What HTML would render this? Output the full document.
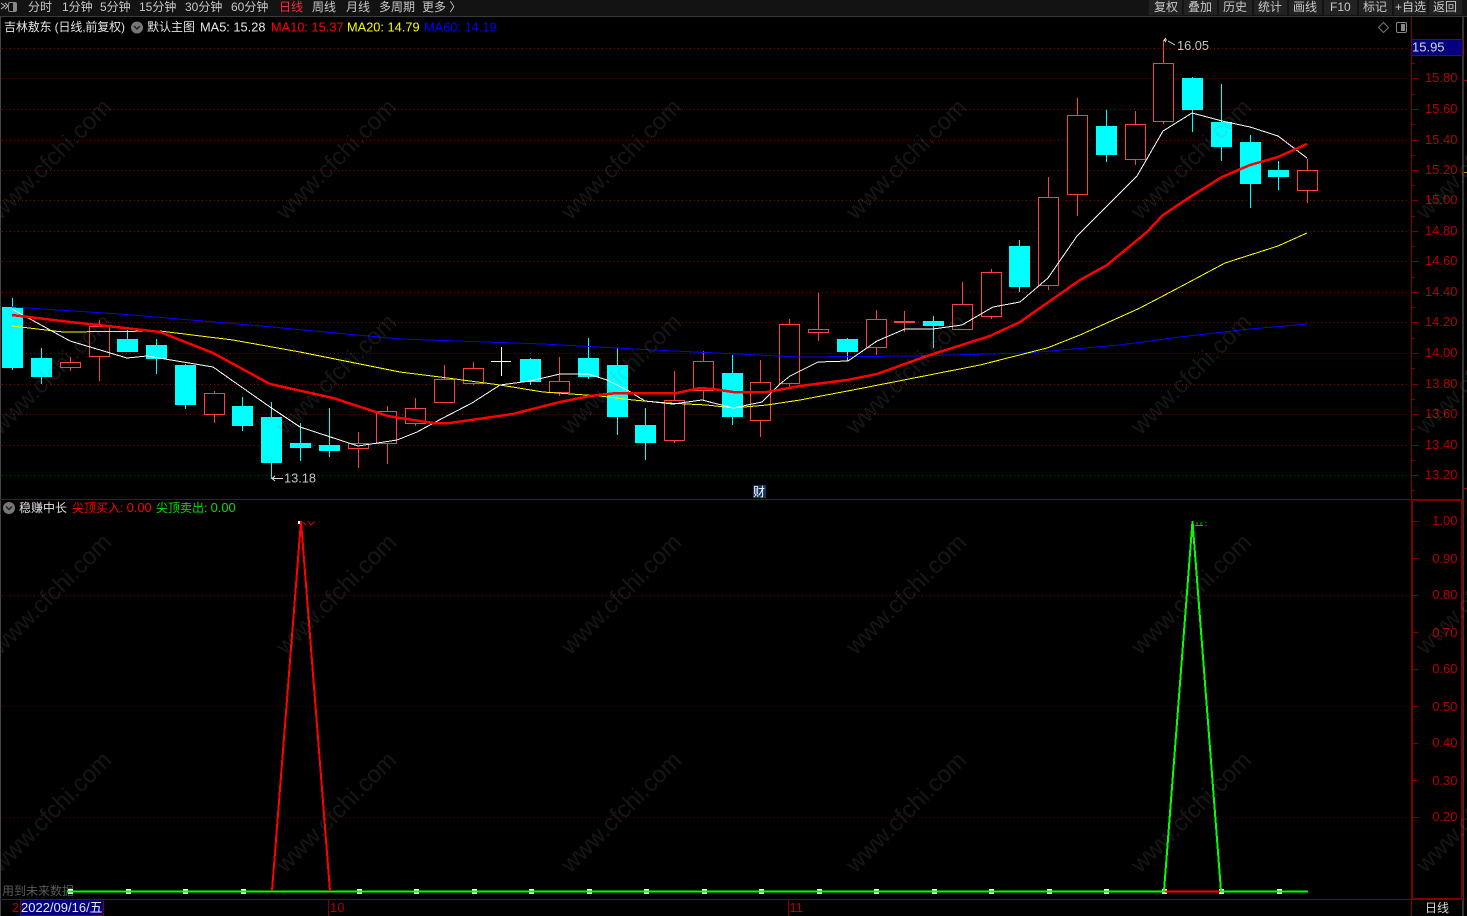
<!DOCTYPE html>
<html lang="zh-CN">
<head>
<meta charset="utf-8">
<title>吉林敖东</title>
<style>
html,body{margin:0;padding:0;background:#000;width:1467px;height:916px;overflow:hidden}
svg{display:block;position:absolute;left:0;top:0}
text{font-family:"Liberation Sans","Noto Sans CJK SC",sans-serif}
</style>
</head>
<body>
<svg width="1467" height="916" viewBox="0 0 1467 916" xmlns="http://www.w3.org/2000/svg">
<rect width="1467" height="916" fill="#000"/>

<!-- toolbar -->
<rect x="0" y="0" width="1467" height="16" fill="#131313"/>
<rect x="0" y="16" width="1467" height="1" fill="#3a3a3a"/>
<g shape-rendering="crispEdges">
<rect x="1149" y="0" width="33" height="15" fill="#222"/>
<rect x="1184" y="0" width="33" height="15" fill="#222"/>
<rect x="1219" y="0" width="33" height="15" fill="#222"/>
<rect x="1254" y="0" width="33" height="15" fill="#222"/>
<rect x="1289" y="0" width="33" height="15" fill="#222"/>
<rect x="1324" y="0" width="33" height="15" fill="#222"/>
<rect x="1359" y="0" width="33" height="15" fill="#222"/>
<rect x="1394" y="0" width="33" height="15" fill="#222"/>
<rect x="1429" y="0" width="33" height="15" fill="#222"/>
</g>
<path d="M1 3L5 6L1 9M5 3L8 6L5 9" fill="none" stroke="#bbb" stroke-width="1"/>
<rect x="8.5" y="2.5" width="8" height="9" rx="1.5" fill="#111" stroke="#888"/>
<rect x="13" y="3" width="3" height="8" fill="#888"/>
<g font-size="12" fill="#c8c8c8">
<text x="28" y="11">分时</text>
<text x="62" y="11">1分钟</text>
<text x="100" y="11">5分钟</text>
<text x="139" y="11">15分钟</text>
<text x="185" y="11">30分钟</text>
<text x="231" y="11">60分钟</text>
<text x="279" y="11" fill="#f03030">日线</text>
<text x="312" y="11">周线</text>
<text x="346" y="11">月线</text>
<text x="379" y="11">多周期</text>
<text x="422" y="11">更多 〉</text>
<text x="1154" y="11">复权</text>
<text x="1188" y="11">叠加</text>
<text x="1223" y="11">历史</text>
<text x="1258" y="11">统计</text>
<text x="1293" y="11">画线</text>
<text x="1330" y="11">F10</text>
<text x="1363" y="11">标记</text>
<text x="1395" y="11">+自选</text>
<text x="1433" y="11">返回</text>
</g>

<!-- frame -->
<g shape-rendering="crispEdges">
<rect x="0" y="17" width="1" height="899" fill="#444"/>
<rect x="1462" y="17" width="2" height="899" fill="#333"/>
<rect x="1411" y="17" width="1" height="482" fill="#800000"/>
<rect x="0" y="499" width="1462" height="1" fill="#800000"/>
<rect x="0" y="899" width="1411" height="1" fill="#800000"/>
<rect x="1411" y="899" width="1" height="17" fill="#800000"/>
<rect x="1412" y="500" width="50" height="399" fill="none" stroke="#800000" stroke-width="2"/>
<rect x="1464" y="80" width="3" height="1" fill="#a00000"/>
<rect x="1464" y="172" width="3" height="1" fill="#c09000"/>
<rect x="1464" y="488" width="3" height="1" fill="#a00000"/>
</g>

<!-- grid -->
<g stroke="#900000" stroke-width="1" stroke-dasharray="1 3" shape-rendering="crispEdges">
<path d="M2 48.5H1408M2 78.5H1408M2 109.5H1408M2 140.5H1408M2 170.5H1408M2 200.5H1408M2 231.5H1408M2 261.5H1408M2 292.5H1408M2 322.5H1408M2 353.5H1408M2 384.5H1408M2 414.5H1408M2 445.5H1408M2 475.5H1408"/>
<path d="M2 595.5H1408" stroke="#700000"/>
<path d="M2 706.5H1408M2 817.5H1408" stroke="#500000"/>
</g>

<!-- axis ticks -->
<g stroke="#800000" stroke-width="1" shape-rendering="crispEdges" fill="none">
<path d="M1411 78.5H1418M1411 109.5H1418M1411 140.5H1418M1411 170.5H1418M1411 200.5H1418M1411 231.5H1418M1411 261.5H1418M1411 292.5H1418M1411 322.5H1418M1411 353.5H1418M1411 384.5H1418M1411 414.5H1418M1411 445.5H1418M1411 475.5H1418"/>
<path d="M1411 63.5H1415M1411 94.5H1415M1411 124.5H1415M1411 155.5H1415M1411 185.5H1415M1411 216.5H1415M1411 246.5H1415M1411 277.5H1415M1411 307.5H1415M1411 338.5H1415M1411 368.5H1415M1411 399.5H1415M1411 429.5H1415M1411 460.5H1415M1411 490.5H1415"/>
<path d="M1413 521.5H1418M1413 558.5H1418M1413 595.5H1418M1413 632.5H1418M1413 669.5H1418M1413 706.5H1418M1413 743.5H1418M1413 780.5H1418M1413 817.5H1418"/>
<path d="M328.5 900V916M788.5 900V916"/>
</g>
<g font-size="13" fill="#b00000" text-anchor="end">
<text x="1457.500" y="82">15.80</text>
<text x="1457.500" y="113">15.60</text>
<text x="1457.500" y="144">15.40</text>
<text x="1457.500" y="174">15.20</text>
<text x="1457.500" y="204">15.00</text>
<text x="1457.500" y="235">14.80</text>
<text x="1457.500" y="265">14.60</text>
<text x="1457.500" y="296">14.40</text>
<text x="1457.500" y="326">14.20</text>
<text x="1457.500" y="357">14.00</text>
<text x="1457.500" y="388">13.80</text>
<text x="1457.500" y="418">13.60</text>
<text x="1457.500" y="449">13.40</text>
<text x="1457.500" y="479">13.20</text>
<text x="1457.500" y="525">1.00</text>
<text x="1457.500" y="563">0.90</text>
<text x="1457.500" y="599">0.80</text>
<text x="1457.500" y="637">0.70</text>
<text x="1457.500" y="673">0.60</text>
<text x="1457.500" y="711">0.50</text>
<text x="1457.500" y="747">0.40</text>
<text x="1457.500" y="785">0.30</text>
<text x="1457.500" y="821">0.20</text>
</g>
<rect x="1411.5" y="39.5" width="51" height="16" fill="#000080" stroke="#800000" shape-rendering="crispEdges"/>
<text x="1412" y="51.500" font-size="13" fill="#d8d8d8">15.95</text>

<!-- candle wicks -->
<g shape-rendering="crispEdges" fill="none" stroke-width="1">
<path stroke="#00ffff" d="M12.5 298V370M41.5 348V384M127.5 330V352M156.5 339V374M185.5 364V409M242.5 397V431M271.5 402V479M300.5 423V461M329.5 408V457M530.5 358V385M588.5 338V379M617.5 348V435M645.5 408V460M732.5 355V425M847.5 338V361M933.5 316V348M1019.5 240V292M1106.5 110V162M1192.5 77V132M1221.5 84V161M1250.5 135V208M1278.5 161V190"/>
<path stroke="#ff4040" d="M70.5 357V371M99.5 320V381M214.5 391V423M358.5 432V468M387.5 406V464M415.5 398V426M444.5 365V403M473.5 362V385M559.5 357V396M674.5 371V443M703.5 351V400M760.5 360V437M789.5 319V387M818.5 293V341M876.5 310V355M904.5 311V332M962.5 282V329M991.5 269V319M1048.5 177V290M1077.5 98V216M1135.5 111V165M1163.5 40V124M1307.5 159V203"/>
<path stroke="#ffffff" d="M501.5 347V376M491 361.5H511"/>
</g>
<!-- hollow red bodies -->
<g shape-rendering="crispEdges" fill="#000" stroke="#ff4040" stroke-width="1">
<rect x="60.5" y="362.5" width="20" height="5"/>
<rect x="89.5" y="326.5" width="20" height="30"/>
<rect x="204.5" y="393.5" width="20" height="21"/>
<rect x="348.5" y="443.5" width="20" height="5"/>
<rect x="376.5" y="411.5" width="20" height="32"/>
<rect x="405.5" y="408.5" width="20" height="15"/>
<rect x="434.5" y="379.5" width="20" height="23"/>
<rect x="463.5" y="368.5" width="20" height="15"/>
<rect x="549.5" y="381.5" width="20" height="11"/>
<rect x="664.5" y="400.5" width="20" height="40"/>
<rect x="693.5" y="361.5" width="20" height="29"/>
<rect x="750.5" y="382.5" width="20" height="38"/>
<rect x="779.5" y="324.5" width="20" height="59"/>
<rect x="808.5" y="329.5" width="20" height="3"/>
<rect x="866.5" y="319.5" width="20" height="28"/>
<rect x="952.5" y="304.5" width="20" height="25"/>
<rect x="981.5" y="272.5" width="20" height="44"/>
<rect x="1038.5" y="197.5" width="20" height="88"/>
<rect x="1067.5" y="115.5" width="20" height="79"/>
<rect x="1125.5" y="124.5" width="20" height="35"/>
<rect x="1153.5" y="63.5" width="20" height="58"/>
<rect x="1297.5" y="170.5" width="20" height="20"/>
</g>
<rect x="894" y="321" width="21" height="2" fill="#ff4040" shape-rendering="crispEdges"/>
<!-- solid cyan bodies -->
<g shape-rendering="crispEdges" fill="#00ffff">
<rect x="2" y="307" width="21" height="61"/>
<rect x="31" y="358" width="21" height="19"/>
<rect x="117" y="339" width="21" height="13"/>
<rect x="146" y="345" width="21" height="14"/>
<rect x="175" y="365" width="21" height="40"/>
<rect x="232" y="406" width="21" height="20"/>
<rect x="261" y="417" width="21" height="46"/>
<rect x="290" y="443" width="21" height="5"/>
<rect x="319" y="445" width="21" height="6"/>
<rect x="520" y="359" width="21" height="23"/>
<rect x="578" y="358" width="21" height="19"/>
<rect x="607" y="365" width="21" height="52"/>
<rect x="635" y="425" width="21" height="18"/>
<rect x="722" y="373" width="21" height="44"/>
<rect x="837" y="339" width="21" height="13"/>
<rect x="923" y="321" width="21" height="5"/>
<rect x="1009" y="246" width="21" height="41"/>
<rect x="1096" y="126" width="21" height="29"/>
<rect x="1182" y="78" width="21" height="32"/>
<rect x="1211" y="122" width="21" height="25"/>
<rect x="1240" y="142" width="21" height="42"/>
<rect x="1268" y="170" width="21" height="7"/>
</g>

<!-- moving averages -->
<g fill="none" stroke-linejoin="round" shape-rendering="crispEdges">
<polyline stroke="#0000ff" stroke-width="1" points="12,307 120,314 250,325 400,339 543,344 653,350 800,357 913,356 1027,353 1120,345 1180,337 1250,329 1307,324"/>
<polyline stroke="#ffff00" stroke-width="1" points="12,326 63,332 160,331 233,340 300,352 400,372 440,377 500,385 543,392 600,396 633,400 667,403 707,405 733,408 767,405 800,400 858,389 980,365 1047,348 1080,335 1140,308 1180,287 1225,263 1278,246 1307,233"/>
<polyline stroke="#ffffff" stroke-width="1" points="12,309 70,341 127,358 147,356 213,367 270,407 300,427 358,446 397,440 417,432 443,418 472,403 500,385 530,381 560,374 588,374 607,380 627,390 645,401 673,404 702,400 733,408 762,402 780,384 790,376 818,362 848,361 877,341 905,329 933,329 962,325 993,307 1020,302 1048,278 1077,236 1137,176 1163,131 1192,113 1222,121 1250,127 1278,136 1307,158"/>
<polyline stroke="#ff0000" stroke-width="2.5" points="12,315 70,322 107,326 160,332 213,353 270,384 333,398 388,416 400,418 433,423 450,423 513,414 560,402 590,396 617,393 677,393 700,388 713,389 733,392 767,392 800,386 847,380 877,374 927,356 990,336 1020,322 1080,280 1107,265 1147,232 1163,215 1190,197 1222,177 1250,165 1278,157 1307,144"/>
</g>

<!-- high/low labels -->
<path d="M1164 40H1167M1164 40L1166 38M1164 40L1166 42M1168 41L1175 45" fill="none" stroke="#e0e0e0" stroke-width="1"/>
<text x="1177" y="50" font-size="12.800" fill="#c4c4c4">16.05</text>
<path d="M272 478.5H283M272 478.5L275 476M272 478.5L275 481" fill="none" stroke="#e0e0e0" stroke-width="1"/>
<text x="284" y="482.500" font-size="12.800" fill="#c4c4c4">13.18</text>
<rect x="753" y="485" width="13" height="13" fill="#12365f"/>
<text x="753" y="496" font-size="12" fill="#fff">财</text>

<!-- top-right icons -->
<path d="M1383.5 22.5L1388.5 27.5L1383.5 32.5L1378.5 27.5Z" fill="none" stroke="#777"/>
<rect x="1396.5" y="22.5" width="10" height="10" rx="1.5" fill="none" stroke="#888"/>
<rect x="1401" y="24" width="4" height="7" fill="#888"/>

<!-- title row -->
<text x="4" y="31" font-size="12" fill="#e4e4e4" textLength="121" lengthAdjust="spacing">吉林敖东 (日线,前复权)</text>
<circle cx="137" cy="27.5" r="6" fill="#777"/>
<path d="M134 26L137 29L140 26" fill="none" stroke="#222" stroke-width="1.5"/>
<text x="147" y="31" font-size="12" fill="#e4e4e4">默认主图</text>
<g font-size="12.800">
<text x="200" y="31.500" fill="#e8e8e8">MA5: 15.28</text>
<text x="271" y="31.500" fill="#ff0000">MA10: 15.37</text>
<text x="347" y="31.500" fill="#ffff00">MA20: 14.79</text>
<text x="424" y="31.500" fill="#0000ff">MA60: 14.19</text>
</g>

<!-- indicator row -->
<circle cx="9" cy="508" r="6" fill="#777"/>
<path d="M6 506.5L9 509.5L12 506.5" fill="none" stroke="#222" stroke-width="1.5"/>
<text x="19" y="512" font-size="12" fill="#e0e0e0">稳赚中长</text>
<text x="72" y="512" font-size="12" fill="#ff0000">尖顶买入: <tspan font-size="12.800">0.00</tspan></text>
<text x="156" y="512" font-size="12" fill="#00e000">尖顶卖出: <tspan font-size="12.800">0.00</tspan></text>

<!-- lower panel signal -->
<text x="2" y="895" font-size="12" fill="#5a5a5a">用到未来数据</text>
<g fill="#fff" shape-rendering="crispEdges">
<rect x="68" y="889" width="5" height="5"/><rect x="126" y="889" width="5" height="5"/><rect x="183" y="889" width="5" height="5"/><rect x="241" y="889" width="5" height="5"/><rect x="357" y="889" width="5" height="5"/><rect x="414" y="889" width="5" height="5"/><rect x="472" y="889" width="5" height="5"/><rect x="529" y="889" width="5" height="5"/><rect x="587" y="889" width="5" height="5"/><rect x="644" y="889" width="5" height="5"/><rect x="702" y="889" width="5" height="5"/><rect x="759" y="889" width="5" height="5"/><rect x="817" y="889" width="5" height="5"/><rect x="874" y="889" width="5" height="5"/><rect x="932" y="889" width="5" height="5"/><rect x="989" y="889" width="5" height="5"/><rect x="1047" y="889" width="5" height="5"/><rect x="1104" y="889" width="5" height="5"/><rect x="1162" y="889" width="5" height="5"/><rect x="1219" y="889" width="5" height="5"/><rect x="1277" y="889" width="5" height="5"/>
<rect x="298" y="521" width="2" height="3"/>
</g>
<path d="M67 891.5H1308" stroke="#00ff00" stroke-width="2" shape-rendering="crispEdges"/>
<path d="M1165 891.5H1220" stroke="#ff0000" stroke-width="2" shape-rendering="crispEdges"/>
<polyline points="272,891 301,521 330,891" fill="none" stroke="#ff0000" stroke-width="2" shape-rendering="crispEdges"/>
<polyline points="1164,891 1192.500,521 1221,891" fill="none" stroke="#00ff00" stroke-width="2" shape-rendering="crispEdges"/>
<path d="M303 522L306 525M308 521L311 525L314 522M314 522H315" fill="none" stroke="#e00000" stroke-width="1"/>
<path d="M1195 525.500H1203M1197 522V525M1201 522V525M1206 522V523M1206 525V526" fill="none" stroke="#00c000" stroke-width="1" shape-rendering="crispEdges"/>

<!-- date axis -->
<text x="12" y="912" font-size="13" fill="#b00000">2</text>
<rect x="20.500" y="899.500" width="83" height="16" fill="#000080" stroke="#800000" shape-rendering="crispEdges"/>
<text x="21" y="912" font-size="13" fill="#e8e8e8">2022/09/16/五</text>
<text x="330" y="912" font-size="13" fill="#b00000">10</text>
<text x="789.500" y="912" font-size="13" fill="#b00000">11</text>
<text x="1425" y="912" font-size="12" fill="#d8d8d8">日线</text>

<!-- watermarks -->
<g font-size="24" fill="rgba(128,128,128,0.17)" text-anchor="middle">
<text x="51" y="167" transform="rotate(-45 51 159)">www.cfchi.com</text>
<text x="336" y="167" transform="rotate(-45 336 159)">www.cfchi.com</text>
<text x="621" y="167" transform="rotate(-45 621 159)">www.cfchi.com</text>
<text x="906" y="167" transform="rotate(-45 906 159)">www.cfchi.com</text>
<text x="1191" y="167" transform="rotate(-45 1191 159)">www.cfchi.com</text>
<text x="1476" y="167" transform="rotate(-45 1476 159)">www.cfchi.com</text>
<text x="51" y="382" transform="rotate(-45 51 374)">www.cfchi.com</text>
<text x="336" y="382" transform="rotate(-45 336 374)">www.cfchi.com</text>
<text x="621" y="382" transform="rotate(-45 621 374)">www.cfchi.com</text>
<text x="906" y="382" transform="rotate(-45 906 374)">www.cfchi.com</text>
<text x="1191" y="382" transform="rotate(-45 1191 374)">www.cfchi.com</text>
<text x="1476" y="382" transform="rotate(-45 1476 374)">www.cfchi.com</text>
<text x="51" y="602" transform="rotate(-45 51 594)">www.cfchi.com</text>
<text x="336" y="602" transform="rotate(-45 336 594)">www.cfchi.com</text>
<text x="621" y="602" transform="rotate(-45 621 594)">www.cfchi.com</text>
<text x="906" y="602" transform="rotate(-45 906 594)">www.cfchi.com</text>
<text x="1191" y="602" transform="rotate(-45 1191 594)">www.cfchi.com</text>
<text x="1476" y="602" transform="rotate(-45 1476 594)">www.cfchi.com</text>
<text x="51" y="820" transform="rotate(-45 51 812)">www.cfchi.com</text>
<text x="336" y="820" transform="rotate(-45 336 812)">www.cfchi.com</text>
<text x="621" y="820" transform="rotate(-45 621 812)">www.cfchi.com</text>
<text x="906" y="820" transform="rotate(-45 906 812)">www.cfchi.com</text>
<text x="1191" y="820" transform="rotate(-45 1191 812)">www.cfchi.com</text>
<text x="1476" y="820" transform="rotate(-45 1476 812)">www.cfchi.com</text>
</g>
</svg>
</body>
</html>
